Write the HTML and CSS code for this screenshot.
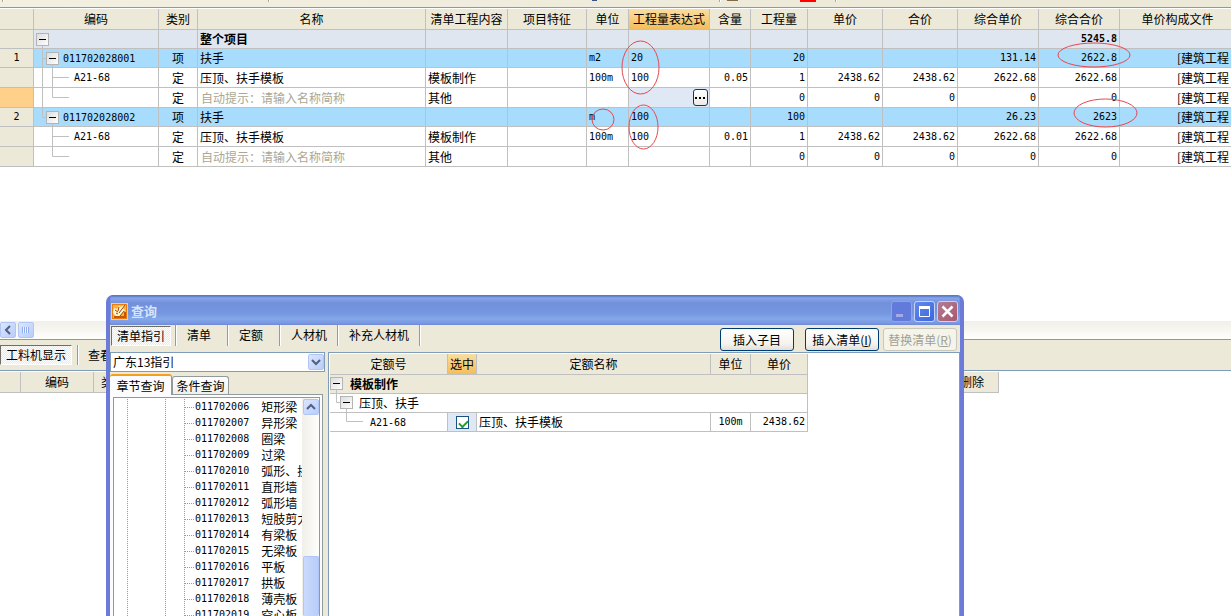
FILE: index.html
```html
<!DOCTYPE html>
<html lang="zh-CN">
<head>
<meta charset="utf-8">
<title>工程量清单</title>
<link rel="stylesheet" href="styles.css">
</head>
<body>
<svg class="defs" aria-hidden="true">
  <defs>
    <linearGradient id="boxfill" x1="0" y1="0" x2="1" y2="1"><stop offset="0" stop-color="#dcdcdc"/><stop offset="1" stop-color="#fff"/></linearGradient>
    <g id="box"><rect x=".5" y=".5" width="12" height="12" fill="url(#boxfill)" stroke="#b4b4b4"/><path d="M3 6.5H10" stroke="#000"/></g>
    <g id="root" fill="none" stroke="#c0c0c0"><path d="M8.5 15V20"/><use href="#box" x="2" y="3"/></g>
    <g id="item" fill="none" stroke="#c0c0c0"><path d="M8.5 0V20M8.5 9.5H12M18.5 15V20"/><use href="#box" x="12" y="3"/></g>
    <g id="item-end" fill="none" stroke="#c0c0c0"><path d="M8.5 0V9.5H12M18.5 15V20"/><use href="#box" x="12" y="3"/></g>
    <g id="child" fill="none" stroke="#c0c0c0"><path d="M18.5 0V20M18.5 9.5H35"/></g>
    <g id="child-end" fill="none" stroke="#c0c0c0"><path d="M18.5 0V9.5H35"/></g>
    <g id="trunk" fill="none" stroke="#c0c0c0"><path d="M8.5 0V20"/></g>
  </defs>
</svg>
<main class="app">
  <div class="strip">
    <svg width="900" height="7" aria-hidden="true"><path d="M2.5 0V2M268.5 0V2M719.5 0V2M835.5 0V2" stroke="#aaa794"/><path d="M3.5 0V2M269.5 0V2M720.5 0V2M836.5 0V2" stroke="#fff"/><path fill="#3c5280" d="M592 0h5v1h-5z"/><path fill="#856a4a" d="M727 0h11v1h-11z"/><path fill="red" d="M800 0h16v2h-16z"/></svg>
  </div>
  <table class="grid bill">
    <colgroup><col class="c34"><col class="c125"><col class="c39"><col class="c228"><col class="c82"><col class="c79"><col class="c42"><col class="c81"><col class="c41"><col class="c57"><col class="c75"><col class="c75"><col class="c81"><col class="c81"><col></colgroup>
    <thead><tr><th></th><th>编码</th><th>类别</th><th>名称</th><th>清单工程内容</th><th>项目特征</th><th>单位</th><th class="hot">工程量表达式</th><th>含量</th><th>工程量</th><th>单价</th><th>合价</th><th>综合单价</th><th>综合合价</th><th class="file">单价构成文件</th></tr></thead>
    <tbody>
      <tr class="total"><td class="idx"></td><td><div class="node"><svg class="t29"><use href="#root"/></svg></div></td><td></td><td>整个项目</td><td></td><td></td><td></td><td></td><td></td><td></td><td></td><td></td><td></td><td class="num">5245.8</td><td class="file"></td></tr>
      <tr class="item"><td class="idx num">1</td><td><div class="node num"><svg class="t29"><use href="#item"/></svg>011702028001</div></td><td class="mid">项</td><td>扶手</td><td></td><td></td><td class="num left">m2</td><td class="num left">20</td><td></td><td class="num">20</td><td></td><td></td><td class="num">131.14</td><td class="num">2622.8</td><td class="file">[建筑工程</td></tr>
      <tr class="sub"><td class="idx"></td><td><div class="node num"><svg class="t40"><use href="#trunk"/><use href="#child"/></svg>A21-68</div></td><td class="mid">定</td><td>压顶、扶手模板</td><td>模板制作</td><td></td><td class="num left">100m</td><td class="num left">100</td><td class="num">0.05</td><td class="num">1</td><td class="num">2438.62</td><td class="num">2438.62</td><td class="num">2622.68</td><td class="num">2622.68</td><td class="file">[建筑工程</td></tr>
      <tr class="sub"><td class="idx current"></td><td><div class="node"><svg class="t40"><use href="#trunk"/><use href="#child-end"/></svg></div></td><td class="mid">定</td><td class="hint">自动提示：请输入名称简称</td><td>其他</td><td></td><td></td><td class="editing"><button class="more" aria-label="编辑表达式"><svg width="13" height="13"><path d="M1 6h2v2H1zM5 6h2v2H5zM9 6h2v2H9z"/></svg></button></td><td></td><td class="num">0</td><td class="num">0</td><td class="num">0</td><td class="num">0</td><td class="num">0</td><td class="file">[建筑工程</td></tr>
      <tr class="item"><td class="idx num">2</td><td><div class="node num"><svg class="t29"><use href="#item-end"/></svg>011702028002</div></td><td class="mid">项</td><td>扶手</td><td></td><td></td><td class="num left">m</td><td class="num left">100</td><td></td><td class="num">100</td><td></td><td></td><td class="num">26.23</td><td class="num">2623</td><td class="file">[建筑工程</td></tr>
      <tr class="sub"><td class="idx"></td><td><div class="node num"><svg class="t40"><use href="#child"/></svg>A21-68</div></td><td class="mid">定</td><td>压顶、扶手模板</td><td>模板制作</td><td></td><td class="num left">100m</td><td class="num left">100</td><td class="num">0.01</td><td class="num">1</td><td class="num">2438.62</td><td class="num">2438.62</td><td class="num">2622.68</td><td class="num">2622.68</td><td class="file">[建筑工程</td></tr>
      <tr class="sub"><td class="idx"></td><td><div class="node"><svg class="t40"><use href="#child-end"/></svg></div></td><td class="mid">定</td><td class="hint">自动提示：请输入名称简称</td><td>其他</td><td></td><td></td><td></td><td></td><td class="num">0</td><td class="num">0</td><td class="num">0</td><td class="num">0</td><td class="num">0</td><td class="file">[建筑工程</td></tr>
    </tbody>
  </table>
  <svg class="marks" aria-hidden="true"><g fill="none" stroke="#e8474f"><ellipse cx="640.5" cy="67.5" rx="18.5" ry="26.5"/><ellipse cx="643.5" cy="127" rx="14.5" ry="22"/><ellipse cx="603" cy="119.5" rx="11" ry="10.5"/><ellipse cx="1094" cy="55" rx="36" ry="12"/><ellipse cx="1105.5" cy="113" rx="31.5" ry="14"/></g></svg>
  <div class="hscroll">
    <button class="xp" aria-label="向左滚动"><svg width="14" height="14"><path d="M9 3L5 7l4 4" fill="none" stroke="#4d6185" stroke-width="2"/></svg></button>
    <div class="xp"><svg width="14" height="14"><path d="M3.5 4v6M5.5 4v6M7.5 4v6M9.5 4v6" stroke="#8cadf0"/><path d="M4.5 4v6M6.5 4v6M8.5 4v6" stroke="#eef4fe"/></svg></div>
  </div>
  <div class="lowbar"><button class="flat pressed">工料机显示</button><span class="sep"></span><button class="flat">查看</button></div>
  <div class="lowhead"><span class="c21"></span><span class="c73">编码</span><span class="c39">类别</span><span class="grow"></span><span class="c53">删除</span></div>
</main>

<section class="dialog" role="dialog" aria-labelledby="dlg-title">
  <header class="title">
    <svg width="17" height="17" aria-hidden="true"><rect x=".5" y=".5" width="16" height="16" fill="#e87c10" stroke="#fbd36a"/><rect x="2" y="2" width="13" height="13" fill="#f6b63a"/><path d="M3 5l3 1 2-3 2 1 3-2-1 4 2 1-4 5-4 2-4-4z" fill="#fff6cf"/><path d="M4 7l3 2M5 10l2 1M8 4l-1 4M14 2l-6 8M13 8l-4 5" stroke="#a04408" fill="none"/><path d="M3 14h11V9" stroke="#c65805" stroke-width="2" fill="none"/></svg>
    <h1 id="dlg-title">查询</h1>
    <button class="win min" aria-label="最小化"><svg width="19" height="19"><path d="M4 12h7v3H4z" fill="#a3a9ea"/></svg></button>
    <button class="win max" aria-label="最大化"><svg width="19" height="19"><path d="M4.500 5.500h10v9h-10z" fill="none" stroke="#fff"/><path d="M4 4h11v3H4z" fill="#fff"/></svg></button>
    <button class="win close" aria-label="关闭"><svg width="19" height="19"><path d="M4.500 4.500l10 10M14.500 4.500l-10 10" stroke="#fff" stroke-width="2.500"/></svg></button>
  </header>
  <div class="content">
    <nav class="tabs">
      <button class="flat pressed">清单指引</button><span class="sep"></span><button class="flat wide">清单</button><span class="sep"></span><button class="flat wide">定额</button><span class="sep"></span><button class="flat">人材机</button><span class="sep"></span><button class="flat">补充人材机</button><span class="sep"></span>
      <span class="grow"></span>
      <button class="push first">插入子目</button><button class="push">插入清单(<u>I</u>)</button><button class="push off" disabled>替换清单(<u>R</u>)</button>
    </nav>
    <div class="split">
      <aside class="side">
        <div class="combo"><select aria-label="指引"><option>广东13指引</option></select><span class="xp"><svg width="14" height="14"><path d="M3 5l4 4 4-4" fill="none" stroke="#4d6185" stroke-width="2"/></svg></span></div>
        <div class="pages"><button class="page on">章节查询</button><button class="page">条件查询</button></div>
        <div class="sheet">
          <div class="tree">
            <ul>
              <li>011702006<b>矩形梁</b></li><li>011702007<b>异形梁</b></li><li>011702008<b>圈梁</b></li><li>011702009<b>过梁</b></li><li>011702010<b>弧形、拱形梁</b></li><li>011702011<b>直形墙</b></li><li>011702012<b>弧形墙</b></li><li>011702013<b>短肢剪力墙</b></li><li>011702014<b>有梁板</b></li><li>011702015<b>无梁板</b></li><li>011702016<b>平板</b></li><li>011702017<b>拱板</b></li><li>011702018<b>薄壳板</b></li><li>011702019<b>空心板</b></li>
            </ul>
            <div class="vscroll"><button class="xp" aria-label="向上滚动"><svg width="14" height="14"><path d="M3 9l4-4 4 4" fill="none" stroke="#4d6185" stroke-width="2"/></svg></button><div class="xp thumb"></div></div>
          </div>
        </div>
      </aside>
      <div class="pane">
        <table class="grid quota">
          <colgroup><col class="c118"><col class="c29"><col class="c234"><col class="c40"><col class="c57"></colgroup>
          <thead><tr><th>定额号</th><th class="hot">选中</th><th>定额名称</th><th>单位</th><th>单价</th></tr></thead>
          <tbody>
            <tr class="chapter"><td colspan="5"><div class="node"><svg class="t20"><use href="#root"/></svg>模板制作</div></td></tr>
            <tr><td colspan="5"><div class="node"><svg class="t29"><use href="#item-end"/></svg>压顶、扶手</div></td></tr>
            <tr><td><div class="node num"><svg class="t40"><use href="#child-end"/></svg>A21-68</div></td><td class="pick"><input type="checkbox" checked aria-label="选中 A21-68"></td><td>压顶、扶手模板</td><td class="num unit">100m</td><td class="num">2438.62</td></tr>
          </tbody>
        </table>
      </div>
    </div>
  </div>
</section>
</body>
</html>
```

FILE: styles.css
```css
* { box-sizing: border-box; }
html, body { height: 100%; }
body {
  margin: 0;
  position: relative;
  overflow: hidden;
  background: #fff;
  color: #000;
  font: 12px/18px "Noto Sans CJK SC", sans-serif;
}
button, select { font: inherit; color: inherit; margin: 0; padding: 0; border: 0; background: none; white-space: nowrap; }
svg { display: block; flex: none; }
.defs { position: absolute; width: 0; height: 0; }
.app { height: 100%; display: flex; flex-direction: column; }
.grow { flex: 1; }

.strip { flex: none; height: 9px; overflow: hidden; background: linear-gradient(90deg, #f3f0e2, #ece9d8 80%); border-bottom: 1px solid #fff; box-shadow: inset 0 -1px #7f9db9; }

/* grids */
.grid { table-layout: fixed; border-collapse: separate; border-spacing: 0; }
.bill { width: 100%; flex: none; }
.grid th, .grid td { padding: 0 2px; border: solid #c0c0c0; border-width: 0 1px 1px 0; overflow: hidden; white-space: nowrap; text-align: left; line-height: 18px; }
.grid th { height: 21px; padding: 0; background: #ece9d8; font-weight: normal; text-align: center; }
.grid th.hot { background: linear-gradient(#fbdda0, #f3bd5c); }
.grid td:first-child:not(.idx) { padding: 0; }
.bill td:nth-child(2) { padding: 0; }
.bill td { height: 19px; }
.bill .sub td { height: 20px; }
.total td { background: #dfe6f0; font-weight: bold; }
.item td { background: #a8dcfc; }
.grid td.num { text-align: right; font-family: "DejaVu Sans Mono", monospace; font-size: 10px; }
.grid td.idx { background: #ece9d8; text-align: center; }
.grid td.current { background: #ffd08a; }
.grid td.mid { text-align: center; }
.grid .hint { color: #aaa794; padding-left: 3px; }
.grid td.left { text-align: left; }
.grid td.unit { text-align: center; }
.grid .file { border-right: 0; padding: 0 2px 0 6px; }
.grid td.file { text-align: right; }
.node { display: flex; height: 18px; overflow: hidden; }
.node.num { font-family: "DejaVu Sans Mono", monospace; font-size: 10px; line-height: 19px; }
.sub .node { height: 19px; }
.quota svg { margin: -1px 0 0 -2px; }
.t20 { width: 22px; height: 20px; }
.t29 { width: 29px; height: 20px; }
.t40 { width: 40px; height: 20px; }
.quota .t29 { width: 31px; }
.quota .t40 { width: 42px; }
.c34 { width: 34px; } .c125 { width: 125px; } .c39 { width: 39px; } .c228 { width: 228px; }
.c82 { width: 82px; } .c79 { width: 79px; } .c42 { width: 42px; } .c81 { width: 81px; }
.c41 { width: 41px; } .c57 { width: 57px; } .c75 { width: 75px; }
.c118 { width: 118px; } .c29 { width: 29px; } .c234 { width: 234px; } .c40 { width: 40px; }
.c21 { width: 21px; } .c73 { width: 73px; } .c53 { width: 53px; }
.grid td.editing { background: #e0e8f5; padding: 0 1px; }
.more { display: block; width: 15px; height: 17px; margin-left: auto; border: 1px solid #003c74; border-radius: 3px; background: linear-gradient(#fff, #ecebe6); }
.marks { position: absolute; left: 0; top: 0; width: 100%; height: 170px; pointer-events: none; }

/* lower pane */
.hscroll { flex: none; display: flex; gap: 2px; align-items: center; height: 18px; margin-top: 154px; background: linear-gradient(#f0efe9, #fefefb); }
.xp { display: flex; align-items: center; justify-content: center; flex: none; width: 16px; height: 16px; border: 1px solid #b0c6f6; border-radius: 2px; background: linear-gradient(135deg, #dbe6fe, #b9cdf9); }
.lowbar { flex: none; display: flex; align-items: center; gap: 5px; height: 32px; background: #ece9d8; border-top: 1px solid #7f9db9; border-bottom: 1px solid #7f9db9; }
.flat { height: 20px; }
.pressed { border: 1px solid; border-color: #716f64 #fff #fff #716f64; background: repeating-conic-gradient(#fff 0 25%, #ece9d8 0 50%) 0 0 / 2px 2px; padding: 0 5px; line-height: 18px; }
.sep { flex: none; width: 2px; height: 20px; border-left: 1px solid #9d9a88; border-right: 1px solid #fff; }
.lowbar .flat:last-child { margin-left: 4px; }
.lowhead { flex: none; display: flex; height: 22px; margin-right: 232px; border-top: 1px solid #fff; }
.lowhead span { background: #ece9d8; border: solid #c0c0c0; border-width: 0 1px 1px 0; text-align: center; line-height: 19px; }

/* query window */
.dialog { position: absolute; left: 106px; right: 267px; top: 295px; bottom: 0; display: flex; flex-direction: column; border: solid #6d7bd8; border-width: 0 4px; border-radius: 7px 7px 0 0; background: #6d7bd8; overflow: hidden; }
.title { flex: none; display: flex; align-items: center; gap: 2px; height: 30px; margin: 0 -4px; padding: 2px 6px 0 5px; background: linear-gradient(#5c78c8 0, #5c78c8 1px, #86a6ea 3px, #7290dc 8px, #7796e0 18px, #82a8ea 24px, #7a98e2 28px, #7088d4 30px); }
.title h1 { flex: 1; margin: 0 0 0 1px; font-size: 13px; line-height: 20px; color: #d8e4f8; }
.win { width: 21px; height: 21px; border: 1px solid #c6d3f5; border-radius: 3px; }
.min { background: #627ad9; border-color: #8ea4e8; }
.max { background: linear-gradient(135deg, #6389ee, #3b66dd); }
.close { background: linear-gradient(135deg, #b27d96, #a9586c); }
.content { flex: 1; min-height: 0; display: flex; flex-direction: column; background: #ece9d8; }
.tabs { flex: none; display: flex; height: 27px; align-items: flex-start; }
.tabs .flat { padding: 0 10px; }
.tabs .wide { padding-right: 16px; }
.tabs .pressed { margin: 1px 4px 0 1px; padding: 0 5px; }
.tabs .sep { height: 21px; }
.push { width: 74px; height: 23px; margin: 3px 4px 0 0; border: 1px solid #003c74; border-radius: 3px; background: linear-gradient(#fff, #f4f3ee 70%, #e2dfd6); line-height: 20px; }
.push.first { margin-right: 11px; }
.push.off { margin-right: 3px; color: #a1a192; border-color: #c9c7ba; background: #f5f4ea; }
.split { flex: 1; min-height: 0; display: flex; gap: 3px; }
.side { flex: none; width: 215px; display: flex; flex-direction: column; }
.combo { flex: none; position: relative; height: 20px; border: 1px solid #7f9db9; background: #fff; }
.combo select { display: block; width: 100%; height: 18px; padding-left: 2px; appearance: none; background: #fff; }
.combo .xp { position: absolute; right: 0; top: 1px; pointer-events: none; }
.pages { flex: none; display: flex; align-items: flex-end; height: 22px; }
.page { width: 57px; height: 18px; border: 1px solid #919b9c; border-bottom: 0; border-radius: 3px 3px 0 0; background: linear-gradient(#fff, #f0f0ea); line-height: 17px; }
.page.on { width: 62px; height: 20px; border-color: #fcfcfe #919b9c; border-left: 0; border-top: 2px solid #f4a01c; background: #fcfcfe; }
.sheet { flex: 1; min-height: 0; display: flex; width: 213px; padding: 2px 2px 0 3px; background: linear-gradient(#fcfcfe, #fcfcfe) padding-box, linear-gradient(90deg, #fcfcfe 61px, #919b9c 61px) border-box; border: solid transparent; border-width: 1px 1px 0 0; }
.tree { flex: 1; min-width: 0; display: flex; border: solid #7f9db9; border-width: 1px 1px 0 1px; background: #fff; }
.tree ul { flex: 1; min-width: 0; margin: 0; padding: 1px 0 0 81px; list-style: none; overflow: hidden; background: repeating-linear-gradient(#fff 0 1px, transparent 1px 2px), linear-gradient(90deg, #fff 13px, #999 13px 14px, #fff 14px 51px, #999 51px 52px, #fff 52px 70px, #999 70px 71px, #fff 71px); }
.tree li { display: flex; gap: 12px; height: 16px; font: 10px/16px "DejaVu Sans Mono", monospace; white-space: nowrap; background: repeating-linear-gradient(90deg, #999 0 1px, #fff 1px 2px) no-repeat 0 8px / 9px 1px; margin-left: -10px; padding-left: 10px; }
.tree b { font: 12px/16px "Noto Sans CJK SC", sans-serif; }
.vscroll { flex: none; width: 17px; display: flex; flex-direction: column; align-items: center; padding-top: 1px; background: linear-gradient(90deg, #f0efe9, #fefefb); }
.thumb { flex: 1; margin-top: 141px; border-bottom: 0; background: linear-gradient(90deg, #cbdafd, #b9cdf9); }
.pane { flex: 1; min-width: 0; padding: 1px 0 0 1px; background: #fff; border: 1px solid #7f9db9; border-bottom: 0; }
.quota { width: 478px; }
.quota td { height: 19px; }
.quota .chapter td { background: #ece9d8; font-weight: bold; }
.quota td.pick { background: #dfe9f5; padding: 0; }
.pick input { display: block; appearance: none; width: 13px; height: 13px; margin: 0 auto; border: 1px solid #1c5180; background: #fff; }
.pick input:checked::after { content: ""; display: block; width: 7px; height: 4px; margin: 3px 0 0 2px; border: solid #21a121; border-width: 0 0 2px 2px; transform: rotate(-45deg); }
```
